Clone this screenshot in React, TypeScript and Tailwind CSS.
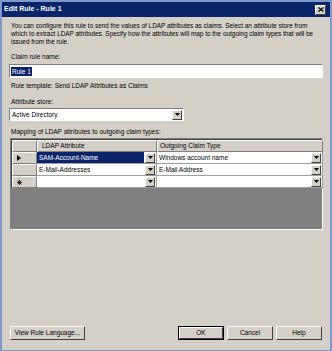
import React from 'react'

const font = { fontFamily: '"Liberation Sans", Arial, sans-serif' }

function DropArrow({ className = '' }: { className?: string }) {
  return (
    <div
      className={`flex h-[10px] w-[10px] shrink-0 items-center justify-center border border-t-white border-l-white border-b-[#404040] border-r-[#404040] bg-[#d4d0c8] ${className}`}
    >
      <svg width="5" height="3" viewBox="0 0 5 3">
        <path d="M0 0h5L2.5 3z" fill="#000" />
      </svg>
    </div>
  )
}

function Button({ label, primary = false, className = '' }: { label: string; primary?: boolean; className?: string }) {
  return (
    <div
      className={`flex h-[14px] items-center justify-center ${primary ? 'border border-black' : ''} ${className}`}
    >
      <div className="flex h-full w-full items-center justify-center border border-t-white border-l-white border-b-[#404040] border-r-[#404040] bg-[#d4d0c8] text-[6.5px] text-black">
        {label}
      </div>
    </div>
  )
}

function RowHead({ mark }: { mark?: 'arrow' | 'star' }) {
  return (
    <div className="flex h-[12px] items-center border border-t-white border-l-white border-b-[#808080] border-r-[#808080] bg-[#d4d0c8] pl-[4px]">
      {mark === 'arrow' && (
        <svg width="4" height="6" viewBox="0 0 4 6">
          <path d="M0 0l4 3-4 3z" fill="#000" />
        </svg>
      )}
      {mark === 'star' && (
        <svg width="5" height="5" viewBox="0 0 5 5">
          <path d="M2.5 0v5M0 2.5h5M0.7 0.7l3.6 3.6M4.3 0.7l-3.6 3.6" stroke="#000" strokeWidth="0.8" />
        </svg>
      )}
    </div>
  )
}

function Cell({ text, selected = false }: { text: string; selected?: boolean }) {
  return (
    <div className="flex h-[12px] items-center justify-between border-b border-r border-[#a0a0a0] bg-white pr-[1px]">
      <span
        className={`flex h-full flex-1 items-center pl-[2px] text-[6.5px] ${selected ? 'bg-[#0a246a] text-white' : 'text-black'}`}
      >
        {text}
      </span>
      <DropArrow className="ml-[1px]" />
    </div>
  )
}

export default function App() {
  return (
    <div style={font} className="flex h-[351px] w-[332px] flex-col bg-[#7d9acb] p-[2px] pb-[1px]">
      <div className="flex h-[15px] shrink-0 items-center justify-between bg-[#0a246a] pl-[2px] pr-[4px]">
        <span className="text-[7px] font-bold text-white">Edit Rule - Rule 1</span>
        <div className="flex h-[10px] w-[11px] items-center justify-center border border-t-white border-l-white border-b-[#404040] border-r-[#404040] bg-[#d4d0c8]">
          <svg width="6" height="5" viewBox="0 0 6 5">
            <path d="M0.5 0.5l5 4M5.5 0.5l-5 4" stroke="#000" strokeWidth="1.2" />
          </svg>
        </div>
      </div>
      <div className="flex flex-1 flex-col bg-[#d4d0c8] px-[7px] pt-[5px] text-black">
        <p className="pl-[2px] text-[6.4px] leading-[8px]">
          You can configure this rule to send the values of LDAP attributes as claims. Select an attribute store from
          which to extract LDAP attributes. Specify how the attributes will map to the outgoing claim types that will be
          issued from the rule.
        </p>

        <div className="mt-[7px] pl-[2px] text-[6.5px] leading-[8px]">Claim rule name:</div>
        <div className="mt-[3px] flex h-[14px] items-center border border-t-[#808080] border-l-[#808080] border-b-white border-r-white bg-white">
          <span className="ml-[1px] bg-[#0a246a] px-[1px] text-[6.5px] leading-[9px] text-white">Rule 1</span>
        </div>

        <div className="mt-[4px] pl-[2px] text-[6.5px] leading-[8px]">Rule template: Send LDAP Attributes as Claims</div>

        <div className="mt-[8px] pl-[2px] text-[6.5px] leading-[8px]">Attribute store:</div>
        <div className="mt-[2px] flex h-[13px] w-[175px] items-center justify-between border border-t-[#808080] border-l-[#808080] border-b-white border-r-white bg-white pr-[1px]">
          <span className="pl-[2px] text-[6.5px]">Active Directory</span>
          <DropArrow />
        </div>

        <div className="mt-[7px] pl-[2px] text-[6.5px] leading-[8px]">Mapping of LDAP attributes to outgoing claim types:</div>
        <div className="mt-[2px] ml-[1px] flex h-[92px] w-[313px] flex-col border border-t-[#808080] border-l-[#808080] border-b-white border-r-white bg-[#808080]">
          <div className="grid grid-cols-[25px_120px_166px] border border-[#404040] border-r-0 border-b-0">
            <div className="h-[12px] border border-t-white border-l-white border-b-[#808080] border-r-[#808080] bg-[#d4d0c8]" />
            <div className="flex h-[12px] items-center border border-t-white border-l-white border-b-[#808080] border-r-[#808080] bg-[#d4d0c8] pl-[4px] text-[6.5px]">
              LDAP Attribute
            </div>
            <div className="flex h-[12px] items-center border border-t-white border-l-white border-b-[#808080] border-r-[#808080] bg-[#d4d0c8] pl-[2px] text-[6.5px]">
              Outgoing Claim Type
            </div>

            <RowHead mark="arrow" />
            <Cell text="SAM-Account-Name" selected />
            <Cell text="Windows account name" />

            <RowHead />
            <Cell text="E-Mail-Addresses" />
            <Cell text="E-Mail Address" />

            <RowHead mark="star" />
            <Cell text="" />
            <Cell text="" />
          </div>
        </div>

        <div className="mt-auto mb-[10px] flex items-center">
          <Button label="View Rule Language..." className="ml-[1px] w-[75px]" />
          <Button label="OK" primary className="ml-auto w-[46px]" />
          <Button label="Cancel" className="ml-[3px] w-[46px]" />
          <Button label="Help" className="ml-[3px] mr-[1px] w-[46px]" />
        </div>
      </div>
    </div>
  )
}
